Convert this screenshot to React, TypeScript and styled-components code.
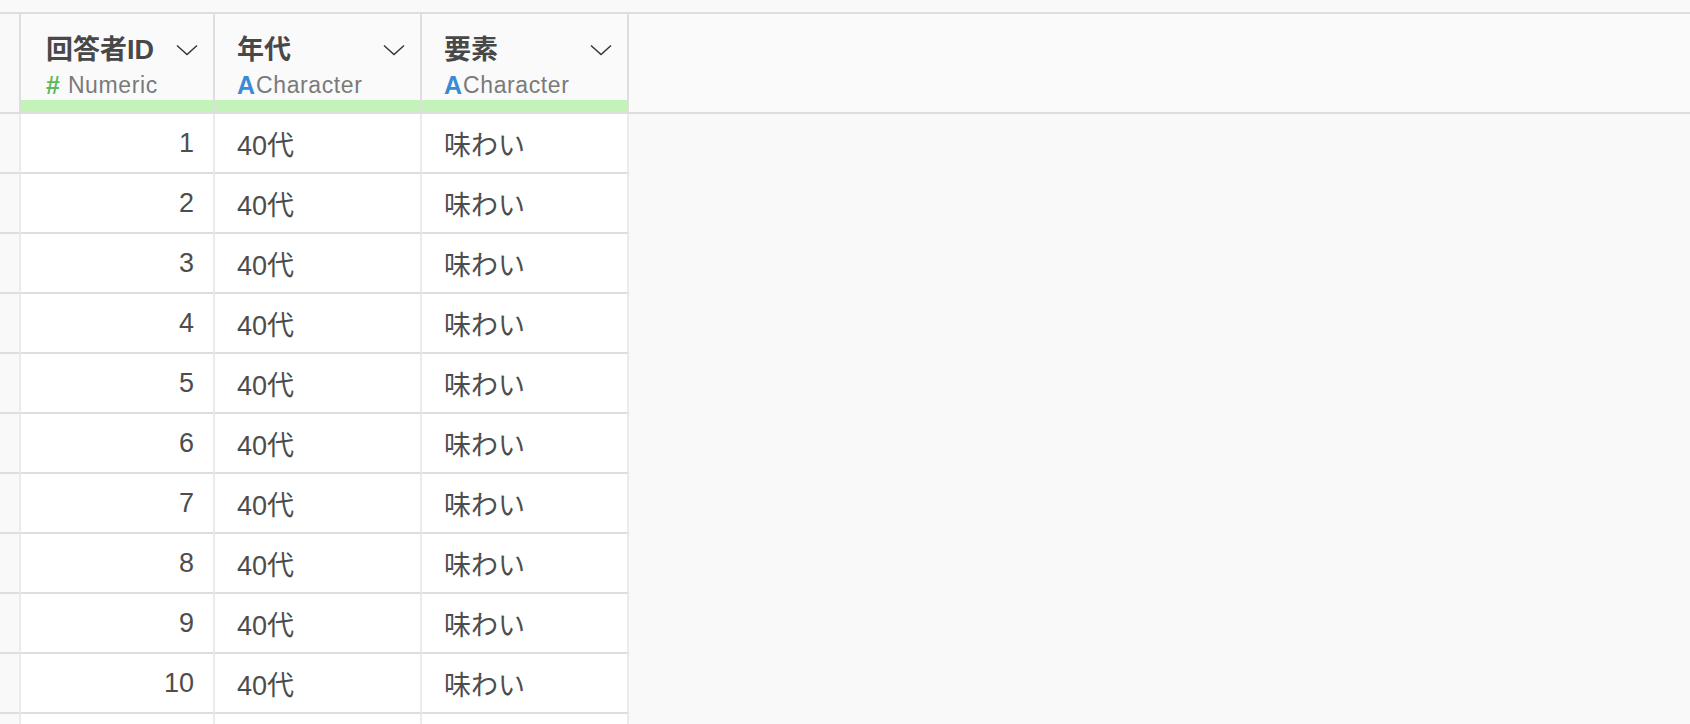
import styled, { createGlobalStyle } from 'styled-components';

const GlobalStyle = createGlobalStyle`
  html, body {
    margin: 0;
    padding: 0;
    background: #f9f9f9;
    overflow: hidden;
  }
  body {
    font-family: "Liberation Sans", "Noto Sans CJK JP", sans-serif;
    color: #4a4a4a;
  }
`;

const Page = styled.div`
  width: 1690px;
  height: 724px;
  padding-top: 12px;
  box-sizing: border-box;
  background: #f9f9f9;
  overflow: hidden;
`;

const HeaderRow = styled.div`
  display: flex;
  border-top: 2px solid #dedede;
  border-bottom: 2px solid #dedede;
  background: #fafafa;
  height: 98px;
`;

const Gutter = styled.div<{ $header?: boolean }>`
  flex: 0 0 19px;
  background: #f9f9f9;
  border-right: 2px solid ${(p) => (p.$header ? '#dedede' : '#ebebeb')};
`;

const HeaderCell = styled.div<{ $width: number }>`
  flex: 0 0 ${(p) => p.$width}px;
  box-sizing: border-box;
  display: flex;
  flex-direction: column;
  border-right: 2px solid #dedede;
`;

const HeaderBody = styled.div<{ $padLeft: number }>`
  flex: 1;
  display: flex;
  flex-direction: column;
  padding: 18px 15px 0 ${(p) => p.$padLeft}px;
`;

const TitleLine = styled.div`
  display: flex;
  align-items: center;
  justify-content: space-between;
  height: 30px;

  svg {
    margin-top: 6px;
  }
`;

const Title = styled.span`
  font-size: 27px;
  font-weight: 700;
  color: #484848;
`;

const TypeLine = styled.div`
  display: flex;
  align-items: center;
  height: 26px;
  margin-top: 10px;
  font-size: 23px;
  letter-spacing: 0.6px;
  color: #7a7a7a;
`;

const TypeIcon = styled.span<{ $color: string; $gap: number }>`
  font-size: 25px;
  font-weight: 700;
  letter-spacing: 0;
  color: ${(p) => p.$color};
  margin-right: ${(p) => p.$gap}px;
`;

const GreenBar = styled.div`
  height: 12px;
  background: #c3f3b8;
`;

const Row = styled.div`
  display: flex;
  height: 60px;
`;

const RowGutter = styled(Gutter)`
  border-bottom: 2px solid #dedede;
`;

const Cell = styled.div<{ $width: number; $align: 'left' | 'right' }>`
  flex: 0 0 ${(p) => p.$width}px;
  box-sizing: border-box;
  display: flex;
  align-items: center;
  justify-content: ${(p) => (p.$align === 'right' ? 'flex-end' : 'flex-start')};
  padding: 0 ${(p) => (p.$align === 'right' ? 19 : 0)}px 0 ${(p) => (p.$align === 'right' ? 0 : 22)}px;
  background: #fff;
  border-right: 2px solid #ebebeb;
  border-bottom: 2px solid #dedede;
  font-size: 27px;
  color: #4d4d4d;
`;

const Chevron = () => (
  <svg width="22" height="12" viewBox="0 0 22 12" fill="none">
    <path d="M1 1.5 L11 10.5 L21 1.5" stroke="#333" strokeWidth="1.4" />
  </svg>
);

interface Column {
  name: string;
  type: 'Numeric' | 'Character';
  width: number;
  padLeft: number;
  align: 'left' | 'right';
}

const columns: Column[] = [
  { name: '回答者ID', type: 'Numeric', width: 194, padLeft: 25, align: 'right' },
  { name: '年代', type: 'Character', width: 207, padLeft: 22, align: 'left' },
  { name: '要素', type: 'Character', width: 207, padLeft: 22, align: 'left' },
];

// 10 filled rows, plus the top of the next row peeking in at the bottom edge
const rows = [
  ...Array.from({ length: 10 }, (_, i) => [String(i + 1), '40代', '味わい']),
  ['', '', ''],
];

export default function App() {
  return (
    <>
      <GlobalStyle />
      <Page>
        <HeaderRow>
          <Gutter $header />
          {columns.map((c) => (
            <HeaderCell key={c.name} $width={c.width}>
              <HeaderBody $padLeft={c.padLeft}>
                <TitleLine>
                  <Title>{c.name}</Title>
                  <Chevron />
                </TitleLine>
                <TypeLine>
                  {c.type === 'Numeric' ? (
                    <TypeIcon $color="#5cb85c" $gap={8}>#</TypeIcon>
                  ) : (
                    <TypeIcon $color="#3a8bd6" $gap={1}>A</TypeIcon>
                  )}
                  {c.type}
                </TypeLine>
              </HeaderBody>
              <GreenBar />
            </HeaderCell>
          ))}
        </HeaderRow>
        {rows.map((r, i) => (
          <Row key={i}>
            <RowGutter />
            {columns.map((c, j) => (
              <Cell key={c.name} $width={c.width} $align={c.align}>
                {r[j]}
              </Cell>
            ))}
          </Row>
        ))}
      </Page>
    </>
  );
}
